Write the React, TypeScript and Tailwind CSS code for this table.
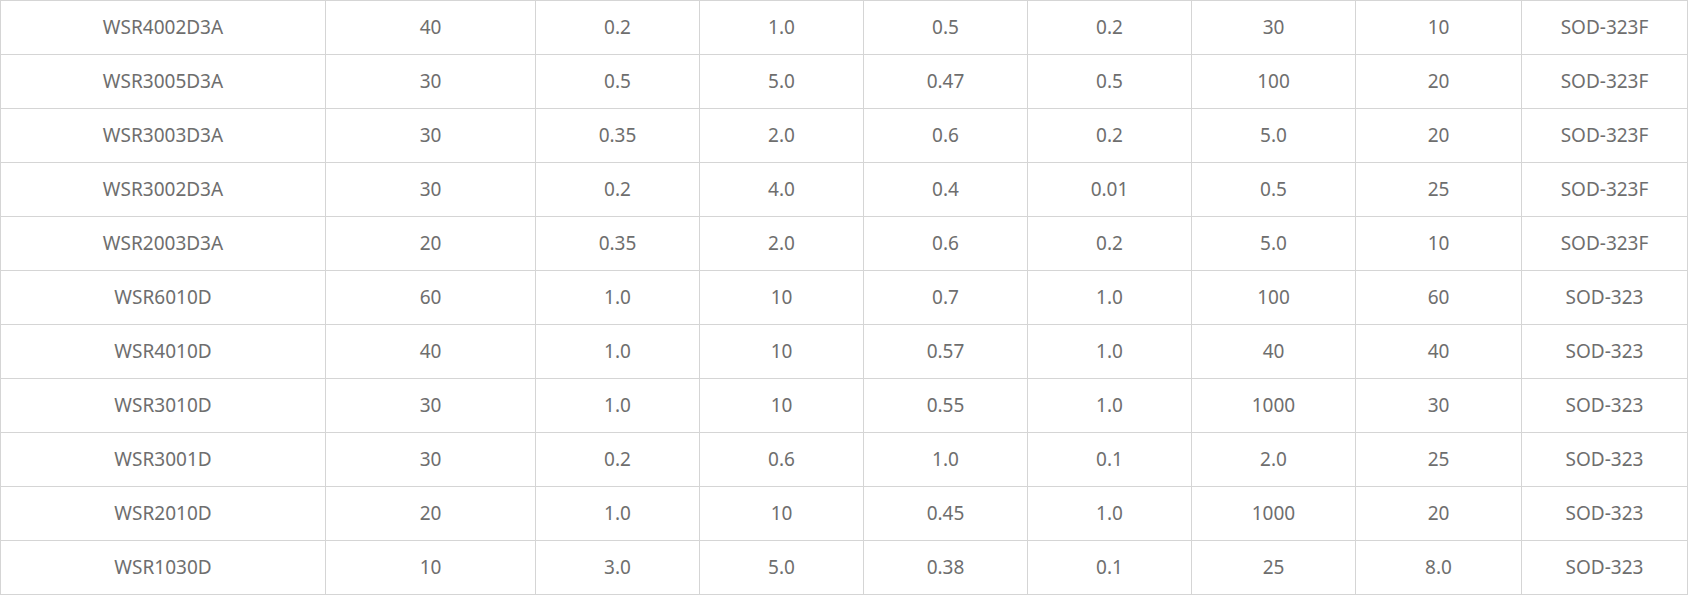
const ROWS: string[][] = [
  ["WSR4002D3A", "40", "0.2", "1.0", "0.5", "0.2", "30", "10", "SOD-323F"],
  ["WSR3005D3A", "30", "0.5", "5.0", "0.47", "0.5", "100", "20", "SOD-323F"],
  ["WSR3003D3A", "30", "0.35", "2.0", "0.6", "0.2", "5.0", "20", "SOD-323F"],
  ["WSR3002D3A", "30", "0.2", "4.0", "0.4", "0.01", "0.5", "25", "SOD-323F"],
  ["WSR2003D3A", "20", "0.35", "2.0", "0.6", "0.2", "5.0", "10", "SOD-323F"],
  ["WSR6010D", "60", "1.0", "10", "0.7", "1.0", "100", "60", "SOD-323"],
  ["WSR4010D", "40", "1.0", "10", "0.57", "1.0", "40", "40", "SOD-323"],
  ["WSR3010D", "30", "1.0", "10", "0.55", "1.0", "1000", "30", "SOD-323"],
  ["WSR3001D", "30", "0.2", "0.6", "1.0", "0.1", "2.0", "25", "SOD-323"],
  ["WSR2010D", "20", "1.0", "10", "0.45", "1.0", "1000", "20", "SOD-323"],
  ["WSR1030D", "10", "3.0", "5.0", "0.38", "0.1", "25", "8.0", "SOD-323"],
];

export default function App() {
  return (
    <div className="w-[1692px] h-[597px] overflow-hidden bg-white">
      <div
        className="grid w-[1688px] grid-cols-[325px_210px_164px_164px_164px_164px_164px_166px_166px] border-l border-t border-[#d5d5d5] text-[19px] text-[#6e6e6e]"
        style={{ fontFamily: '"Noto Sans", "Open Sans", sans-serif' }}
      >
        {ROWS.map((row, ri) =>
          row.map((cell, ci) => (
            <div
              key={ri + "-" + ci}
              className="flex h-[54px] items-center justify-center border-r border-b border-[#d5d5d5] pb-[1px] leading-none"
            >
              {cell}
            </div>
          ))
        )}
      </div>
    </div>
  );
}
